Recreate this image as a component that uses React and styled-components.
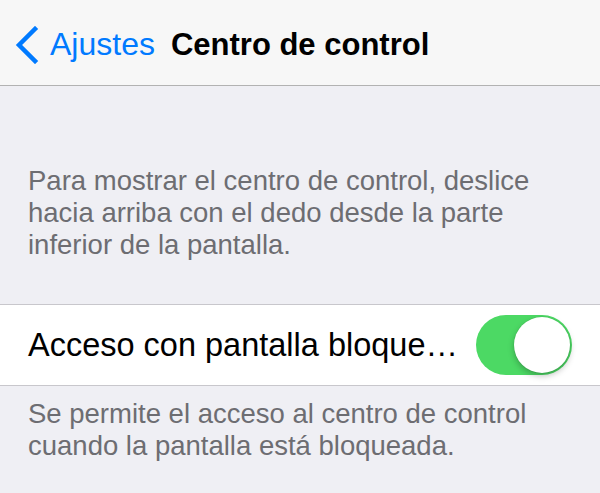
import React, { useState } from 'react';
import styled, { createGlobalStyle } from 'styled-components';

const GlobalStyle = createGlobalStyle`
  html, body {
    margin: 0;
    padding: 0;
    background: #efeff4;
    font-family: "Liberation Sans", Arial, sans-serif;
    -webkit-font-smoothing: antialiased;
  }
`;

const Screen = styled.div`
  width: 600px;
  min-height: 493px;
  background: #efeff4;
  overflow: hidden;
`;

const NavBar = styled.header`
  height: 86px;
  box-sizing: border-box;
  padding: 4px 0 0 15px;
  display: flex;
  align-items: center;
  background: #f7f7f7;
  border-bottom: 1px solid #b2b2b2;
`;

const BackButton = styled.button`
  display: flex;
  align-items: center;
  gap: 11px;
  padding: 0;
  border: none;
  background: none;
  color: #007aff;
  font-family: inherit;
  font-size: 32px;
  cursor: pointer;
`;

const Title = styled.h1`
  margin: 0 0 0 16px;
  font-size: 31px;
  font-weight: 700;
  color: #000;
`;

const Footnote = styled.p`
  margin: 0;
  padding: ${({ $top }) => $top}px 30px 0 28px;
  font-size: 27.5px;
  line-height: 32px;
  color: #6d6d72;
`;

const Group = styled.section`
  margin-top: ${({ $top }) => $top}px;
  background: #fff;
  border-top: 1px solid #c8c7cc;
  border-bottom: 1px solid #c8c7cc;
`;

const Cell = styled.div`
  height: 80px;
  display: flex;
  align-items: center;
  justify-content: space-between;
  padding: 0 28px;
`;

const CellLabel = styled.span`
  font-size: 32.5px;
  color: #000;
  white-space: nowrap;
`;

const Switch = styled.button`
  position: relative;
  width: 96px;
  height: 60px;
  padding: 0;
  border: none;
  border-radius: 30px;
  background: ${({ $on }) => ($on ? '#4cd964' : '#e5e5ea')};
  cursor: pointer;
`;

const Knob = styled.span`
  position: absolute;
  top: 2px;
  left: ${({ $on }) => ($on ? '38px' : '2px')};
  width: 56px;
  height: 56px;
  border-radius: 50%;
  background: #fff;
  box-shadow: 0 3px 6px rgba(0, 0, 0, 0.25), 0 0 0 0.5px rgba(0, 0, 0, 0.08);
  transition: left 0.2s;
`;

const Chevron = () => (
  <svg width="24" height="38" viewBox="0 0 24 38" fill="none">
    <path d="M20 3 L4 19 L20 35" stroke="#007aff" strokeWidth="4.5" strokeLinecap="square" />
  </svg>
);

const App = () => {
  const [on, setOn] = useState(true);

  return (
    <Screen>
      <GlobalStyle />
      <NavBar>
        <BackButton>
          <Chevron />
          Ajustes
        </BackButton>
        <Title>Centro de control</Title>
      </NavBar>

      <Footnote $top={79}>
        Para mostrar el centro de control, deslice hacia arriba con el dedo desde la parte
        inferior de la pantalla.
      </Footnote>

      <Group $top={43}>
        <Cell>
          <CellLabel>Acceso con pantalla bloque…</CellLabel>
          <Switch $on={on} onClick={() => setOn(!on)}>
            <Knob $on={on} />
          </Switch>
        </Cell>
      </Group>

      <Footnote $top={12}>
        Se permite el acceso al centro de control cuando la pantalla está bloqueada.
      </Footnote>
    </Screen>
  );
};

export default App;
